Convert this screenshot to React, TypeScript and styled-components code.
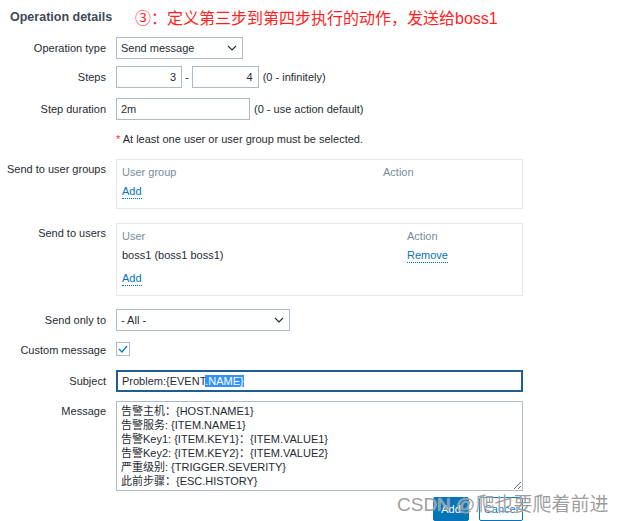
import React from "react";
import styled, { createGlobalStyle } from "styled-components";

const GlobalStyle = createGlobalStyle`
  html, body {
    margin: 0;
    padding: 0;
    background: #ffffff;
  }
  body {
    font-family: "Liberation Sans", Arial, "Noto Sans CJK SC", sans-serif;
    font-size: 11px;
    color: #1f2c33;
  }
`;

const Page = styled.div`
  position: relative;
  width: 623px;
  height: 521px;
  overflow: hidden;
  padding-top: 7px;
  box-sizing: border-box;
`;

const Header = styled.div`
  display: flex;
  align-items: center;
  height: 20px;
  padding-left: 10px;
`;

const Title = styled.h2`
  margin: 0;
  width: 125px;
  font-size: 12.5px;
  font-weight: bold;
  color: #3d4b57;
`;

const Annotation = styled.span`
  font-family: "Liberation Sans", "Noto Sans CJK SC", sans-serif;
  font-size: 16px;
  color: #ff1f1f;
`;

const FormRow = styled.div<{ $mt: number }>`
  display: grid;
  grid-template-columns: 106px 407px;
  column-gap: 10px;
  align-items: start;
  margin-top: ${(p) => p.$mt}px;
`;

const Label = styled.div<{ $pt?: number }>`
  text-align: right;
  line-height: 14px;
  padding-top: ${(p) => (p.$pt === undefined ? 4 : p.$pt)}px;
  white-space: nowrap;
`;

const Field = styled.div`
  display: flex;
  align-items: center;
`;

const Select = styled.div<{ $width: number }>`
  display: flex;
  align-items: center;
  justify-content: space-between;
  width: ${(p) => p.$width}px;
  height: 22px;
  box-sizing: border-box;
  border: 1px solid #acbbc7;
  padding: 0 5px 0 4px;
  line-height: 20px;
  background: #fff;
`;

const TextInput = styled.div<{ $width: number; $right?: boolean }>`
  width: ${(p) => p.$width}px;
  height: 22px;
  box-sizing: border-box;
  border: 1px solid #acbbc7;
  padding: 0 5px 0 4px;
  line-height: 20px;
  text-align: ${(p) => (p.$right ? "right" : "left")};
`;

const Dash = styled.span`
  margin: 0 3px;
`;

const Hint = styled.span`
  margin-left: 4px;
  white-space: nowrap;
`;

const Required = styled.div`
  line-height: 14px;
  span {
    color: #e33734;
  }
`;

const Box = styled.div`
  box-sizing: border-box;
  width: 407px;
  border: 1px solid #e6e9eb;
  padding: 5px 5px 10px;
  display: flex;
  flex-direction: column;
  gap: 5px;
`;

const BoxRow = styled.div<{ $col: number; $pb?: number }>`
  display: grid;
  grid-template-columns: ${(p) => p.$col}px 1fr;
  height: ${(p) => 14 + (p.$pb || 0)}px;
  line-height: 14px;
`;

const HeadCell = styled.div`
  color: #768d99;
`;

const Link = styled.a`
  color: #0275b8;
  text-decoration: none;
  padding-bottom: 1px;
  border-bottom: 1px dotted #0275b8;
  cursor: pointer;
`;

const Checkbox = styled.div`
  width: 14px;
  height: 14px;
  box-sizing: border-box;
  border: 1px solid #acbbc7;
  display: flex;
  align-items: center;
  justify-content: center;
`;

const SubjectInput = styled.div`
  width: 407px;
  height: 22px;
  box-sizing: border-box;
  border: 2px solid #1d5e93;
  padding: 0 4px;
  line-height: 18px;
`;

const Selected = styled.span`
  background: #3390ff;
  color: #ffffff;
`;

const MessageArea = styled.textarea`
  display: block;
  width: 407px;
  height: 90px;
  box-sizing: border-box;
  border: 1px solid #acbbc7;
  padding: 2px 4px;
  margin: 0;
  font-family: "Liberation Sans", Arial, "Noto Sans CJK SC", sans-serif;
  font-size: 11px;
  line-height: 14px;
  color: #1f2c33;
  overflow: hidden;
  resize: vertical;
  outline: none;
`;

const Buttons = styled.div`
  display: flex;
  gap: 10px;
  margin-left: 317px;
`;

const Button = styled.button<{ $primary?: boolean; $width: number }>`
  width: ${(p) => p.$width}px;
  height: 24px;
  box-sizing: border-box;
  border-radius: 2px;
  border: 1px solid #0275b8;
  background: ${(p) => (p.$primary ? "#0275b8" : "#ffffff")};
  color: ${(p) => (p.$primary ? "#ffffff" : "#0275b8")};
  font-family: "Liberation Sans", Arial, sans-serif;
  font-size: 11px;
  padding: 0;
`;

const Watermark = styled.div`
  position: absolute;
  left: 397px;
  top: 489px;
  font-family: "Liberation Sans", "Noto Sans CJK SC", sans-serif;
  font-size: 19px;
  color: rgba(140, 140, 140, 0.85);
  text-shadow: 0 0 1px #ffffff;
  white-space: nowrap;
  pointer-events: none;
`;

const Chevron = () => (
  <svg width="10" height="6" viewBox="0 0 10 6">
    <path d="M1 1 L5 5 L9 1" fill="none" stroke="#1f2c33" strokeWidth="1.1" />
  </svg>
);

const message = [
  "告警主机：{HOST.NAME1}",
  "告警服务: {ITEM.NAME1}",
  "告警Key1: {ITEM.KEY1}：{ITEM.VALUE1}",
  "告警Key2: {ITEM.KEY2}：{ITEM.VALUE2}",
  "严重级别: {TRIGGER.SEVERITY}",
  "此前步骤：{ESC.HISTORY}",
].join("\n");

export default function App() {
  return (
    <Page>
      <GlobalStyle />
      <Header>
        <Title>Operation details</Title>
        <Annotation>③：定义第三步到第四步执行的动作，发送给boss1</Annotation>
      </Header>

      <FormRow $mt={10}>
        <Label>Operation type</Label>
        <Select $width={127}>
          Send message
          <Chevron />
        </Select>
      </FormRow>

      <FormRow $mt={7}>
        <Label>Steps</Label>
        <Field>
          <TextInput $width={66} $right>
            3
          </TextInput>
          <Dash>-</Dash>
          <TextInput $width={67} $right>
            4
          </TextInput>
          <Hint>(0 - infinitely)</Hint>
        </Field>
      </FormRow>

      <FormRow $mt={10}>
        <Label>Step duration</Label>
        <Field>
          <TextInput $width={134}>2m</TextInput>
          <Hint>(0 - use action default)</Hint>
        </Field>
      </FormRow>

      <FormRow $mt={12}>
        <div />
        <Required>
          <span>*</span> At least one user or user group must be selected.
        </Required>
      </FormRow>

      <FormRow $mt={13}>
        <Label $pt={3}>Send to user groups</Label>
        <Box>
          <BoxRow $col={261}>
            <HeadCell>User group</HeadCell>
            <HeadCell>Action</HeadCell>
          </BoxRow>
          <BoxRow $col={261}>
            <div>
              <Link>Add</Link>
            </div>
          </BoxRow>
        </Box>
      </FormRow>

      <FormRow $mt={14}>
        <Label $pt={3}>Send to users</Label>
        <Box>
          <BoxRow $col={285}>
            <HeadCell>User</HeadCell>
            <HeadCell>Action</HeadCell>
          </BoxRow>
          <BoxRow $col={285} $pb={4}>
            <div>boss1 (boss1 boss1)</div>
            <div>
              <Link>Remove</Link>
            </div>
          </BoxRow>
          <BoxRow $col={285}>
            <div>
              <Link>Add</Link>
            </div>
          </BoxRow>
        </Box>
      </FormRow>

      <FormRow $mt={13}>
        <Label>Send only to</Label>
        <Select $width={174}>
          - All -
          <Chevron />
        </Select>
      </FormRow>

      <FormRow $mt={11}>
        <Label $pt={1}>Custom message</Label>
        <Checkbox>
          <svg width="10" height="8" viewBox="0 0 10 8">
            <path d="M1 4 L4 7 L9 1" fill="none" stroke="#0275b8" strokeWidth="1.2" />
          </svg>
        </Checkbox>
      </FormRow>

      <FormRow $mt={13}>
        <Label>Subject</Label>
        <SubjectInput>
          {"Problem:{EVENT"}
          <Selected>{".NAME}"}</Selected>
        </SubjectInput>
      </FormRow>

      <FormRow $mt={9}>
        <Label $pt={3}>Message</Label>
        <MessageArea defaultValue={message} spellCheck={false} />
      </FormRow>

      <FormRow $mt={6}>
        <div />
        <Buttons>
          <Button $primary $width={40}>
            Add
          </Button>
          <Button $width={49}>Cancel</Button>
        </Buttons>
      </FormRow>

      <Watermark>CSDN @爬也要爬着前进</Watermark>
    </Page>
  );
}
